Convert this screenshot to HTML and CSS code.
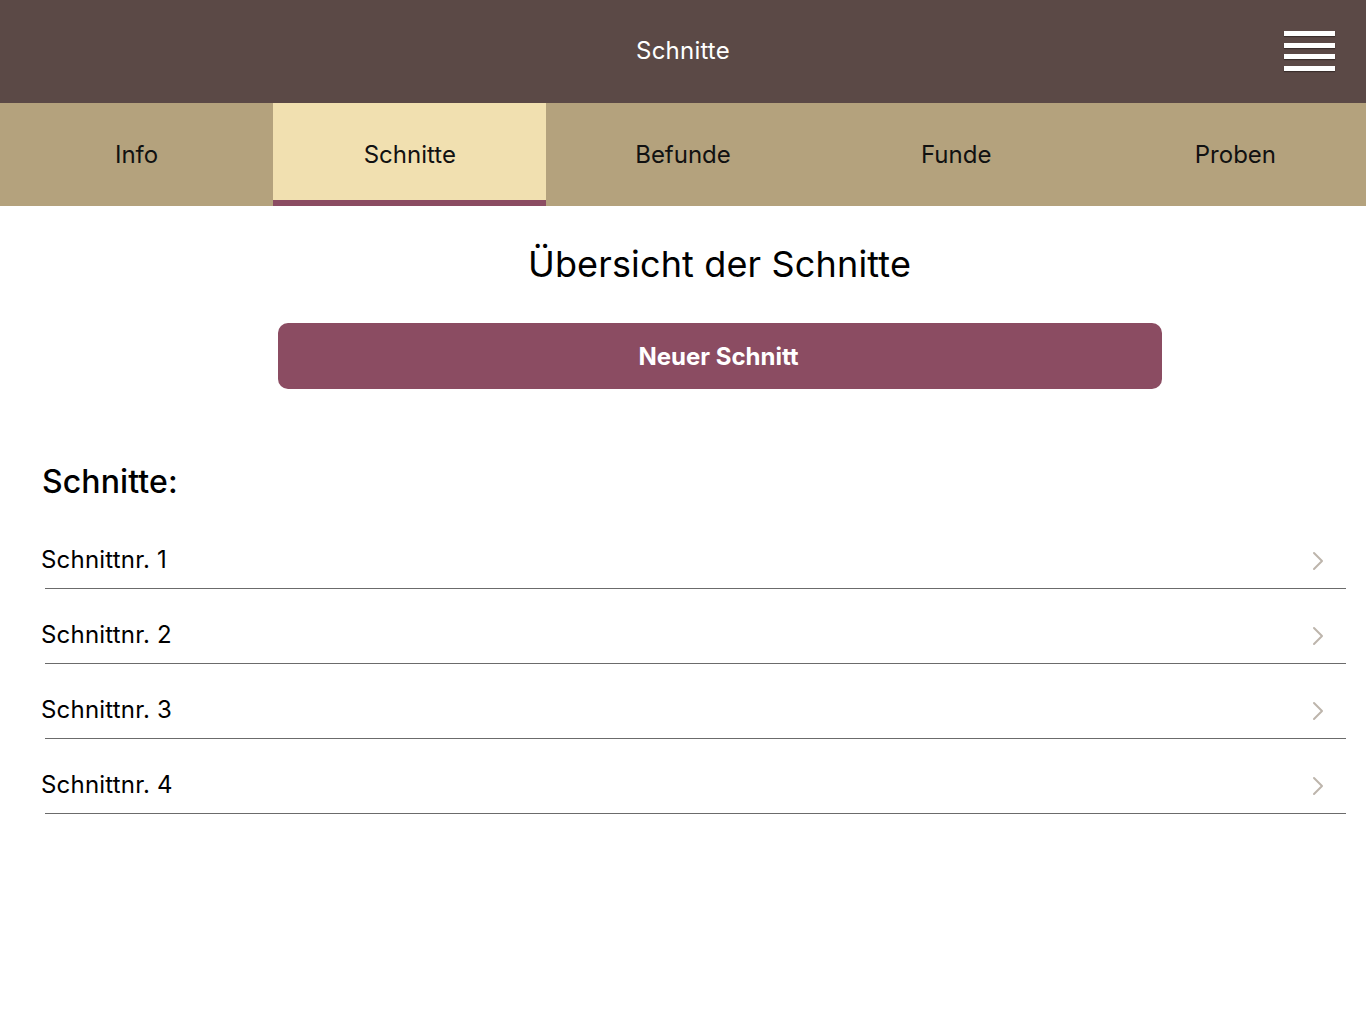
FILE: index.html
```html
<!DOCTYPE html>
<html lang="de">
<head>
<meta charset="utf-8">
<title>Schnitte</title>
<link rel="stylesheet" href="styles.css">
</head>
<body>
<header class="topbar">
  <div class="topbar-side"></div>
  <h1 class="topbar-title">Schnitte</h1>
  <div class="topbar-side topbar-right">
    <button class="burger" aria-label="Menü">
      <span></span><span></span><span></span><span></span>
    </button>
  </div>
</header>
<nav class="tabs">
  <a class="tab">Info</a>
  <a class="tab active">Schnitte</a>
  <a class="tab">Befunde</a>
  <a class="tab">Funde</a>
  <a class="tab tab-last">Proben</a>
</nav>
<main class="content">
  <section class="overview">
    <h2 class="title">Übersicht der Schnitte</h2>
    <button class="primary">Neuer Schnitt</button>
  </section>
  <section class="list-section">
    <h3 class="list-heading">Schnitte:</h3>
    <ul class="list">
      <li class="row"><span>Schnittnr. 1</span><svg class="chev" viewBox="0 0 12 20" width="12" height="20"><path d="M2 2 L10 10 L2 18" fill="none" stroke="#bdb5ac" stroke-width="2" stroke-linecap="round" stroke-linejoin="round"/></svg></li>
      <li class="row"><span>Schnittnr. 2</span><svg class="chev" viewBox="0 0 12 20" width="12" height="20"><path d="M2 2 L10 10 L2 18" fill="none" stroke="#bdb5ac" stroke-width="2" stroke-linecap="round" stroke-linejoin="round"/></svg></li>
      <li class="row"><span>Schnittnr. 3</span><svg class="chev" viewBox="0 0 12 20" width="12" height="20"><path d="M2 2 L10 10 L2 18" fill="none" stroke="#bdb5ac" stroke-width="2" stroke-linecap="round" stroke-linejoin="round"/></svg></li>
      <li class="row"><span>Schnittnr. 4</span><svg class="chev" viewBox="0 0 12 20" width="12" height="20"><path d="M2 2 L10 10 L2 18" fill="none" stroke="#bdb5ac" stroke-width="2" stroke-linecap="round" stroke-linejoin="round"/></svg></li>
    </ul>
  </section>
</main>
</body>
</html>
```
FILE: styles.css
```css
* { box-sizing: border-box; }
html, body { margin: 0; padding: 0; }
body {
  font-family: Inter, "Noto Sans", sans-serif;
  background: #ffffff;
  color: #000;
}
.topbar {
  height: 103px;
  background: #5b4946;
  display: grid;
  grid-template-columns: 1fr auto 1fr;
  align-items: center;
}
.topbar-title {
  margin: 0;
  font-size: 24px;
  font-weight: 400;
  color: #ffffff;
  line-height: 30px;
  padding-bottom: 2px;
  letter-spacing: 0.2px;
}
.topbar-right {
  display: flex;
  justify-content: flex-end;
  padding-right: 31px;
}
.burger {
  width: 51px;
  height: 40px;
  padding: 0;
  border: 0;
  background: none;
  display: flex;
  flex-direction: column;
  justify-content: space-between;
  margin-top: -1px;
}
.burger span {
  display: block;
  height: 5px;
  background: #ffffff;
  box-shadow: 0 1px 1px rgba(0,0,0,0.35);
}
.tabs {
  display: grid;
  grid-template-columns: repeat(5, 1fr);
  height: 103px;
  background: #b4a27d;
}
.tab {
  display: flex;
  align-items: center;
  justify-content: center;
  font-size: 24px;
  color: #111;
}
.tab.active {
  background: #f1e0b0;
  border-bottom: 6px solid #8b4c62;
  padding-top: 6px;
}
.tab-last { padding-left: 12px; }
.content {
  padding: 0 20px 0 39px;
}
.overview {
  display: flex;
  flex-direction: column;
  align-items: center;
  padding-left: 54px;
}
.title {
  margin: 36px 0 0;
  font-size: 36px;
  line-height: 44px;
  font-weight: 400;
  letter-spacing: 0.15px;
}
.primary {
  margin-top: 37px;
  width: 884px;
  height: 66px;
  border: 0;
  border-radius: 10px;
  background: #8b4c62;
  color: #fff;
  font-family: Inter, "Noto Sans", sans-serif;
  font-size: 24px;
  font-weight: 700;
  padding-left: 0;
  padding-right: 2px;
}
.list-section {
  margin-top: 73px;
}
.list-heading {
  margin: 0 0 12px 3px;
  font-size: 32px;
  line-height: 40px;
  font-weight: 500;
  letter-spacing: 0.1px;
}
.list {
  list-style: none;
  margin: 0;
  padding: 0;
}
.row {
  display: flex;
  align-items: center;
  justify-content: space-between;
  padding: 31px 22px 13px 0;
  margin-left: 6px;
  border-bottom: 1px solid #6b6b6b;
  font-size: 24px;
  line-height: 30px;
  letter-spacing: 0.2px;
}
.row span { margin-left: -4px; }
.chev { margin-top: 2px; }
```
